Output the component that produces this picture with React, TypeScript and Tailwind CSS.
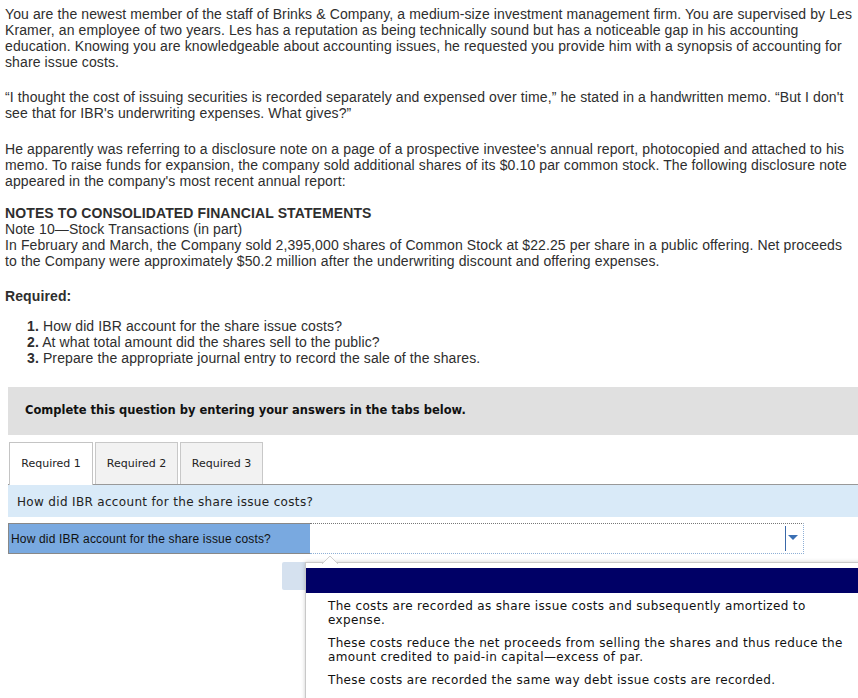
import React from "react";

const main = { fontFamily: '"Liberation Sans", Arial, sans-serif' };
const verd = { fontFamily: '"DejaVu Sans", Verdana, sans-serif' };

export default function App() {
  return (
    <div className="relative w-[858px] h-[698px] overflow-hidden bg-white">
      <div className="pl-[5px] pr-[2px] pt-[6px] text-[14px] leading-[16px] tracking-[0.11px] text-[#2e2e2e]" style={main}>
        <p>
          You are the newest member of the staff of Brinks &amp; Company, a medium-size investment management firm. You are supervised by Les<br />
          Kramer, an employee of two years. Les has a reputation as being technically sound but has a noticeable gap in his accounting<br />
          education. Knowing you are knowledgeable about accounting issues, he requested you provide him with a synopsis of accounting for<br />
          share issue costs.
        </p>
        <p className="mt-[19px]">
          “I thought the cost of issuing securities is recorded separately and expensed over time,” he stated in a handwritten memo. “But I don't<br />
          see that for IBR's underwriting expenses. What gives?”
        </p>
        <p className="mt-[20px]">
          He apparently was referring to a disclosure note on a page of a prospective investee's annual report, photocopied and attached to his<br />
          memo. To raise funds for expansion, the company sold additional shares of its $0.10 par common stock. The following disclosure note<br />
          appeared in the company's most recent annual report:
        </p>
        <div className="mt-[16px]">
          <div className="font-bold">NOTES TO CONSOLIDATED FINANCIAL STATEMENTS</div>
          <div>Note 10—Stock Transactions (in part)</div>
          <div>
            In February and March, the Company sold 2,395,000 shares of Common Stock at $22.25 per share in a public offering. Net proceeds<br />
            to the Company were approximately $50.2 million after the underwriting discount and offering expenses.
          </div>
        </div>
        <div className="mt-[19px] font-bold">Required:</div>
        <div className="mt-[14px] pl-[22px]">
          <div><span className="font-bold">1.</span> How did IBR account for the share issue costs?</div>
          <div><span className="font-bold">2.</span> At what total amount did the shares sell to the public?</div>
          <div><span className="font-bold">3.</span> Prepare the appropriate journal entry to record the sale of the shares.</div>
        </div>
      </div>

      <div className="ml-[8px] mt-[21px]">
        <div className="h-[48px] bg-[#e0e0e0] flex items-center pl-[17px] text-[11.5px] font-bold text-[#111]" style={verd}>
          Complete this question by entering your answers in the tabs below.
        </div>

        <div className="mt-[7px] flex gap-[2px] border-b border-[#999] pl-[1px] h-[43px] items-end">
          <div className="relative -mb-px h-[43px] w-[84px] bg-white border border-b-0 border-[#c4c4c4] flex items-center justify-center pt-[1px] text-[11px] text-[#222]" style={verd}>
            Required 1
          </div>
          <div className="h-[42px] w-[83px] bg-[#f2f2f2] border border-b-0 border-[#c8c8c8] flex items-center justify-center pt-[1px] text-[11px] text-[#222]" style={verd}>
            Required 2
          </div>
          <div className="h-[42px] w-[83px] bg-[#f2f2f2] border border-b-0 border-[#c8c8c8] flex items-center justify-center pt-[1px] text-[11px] text-[#222]" style={verd}>
            Required 3
          </div>
        </div>

        <div className="h-[32px] bg-[#d9eaf8] flex items-center pl-[9px] pt-[1px] text-[12px] tracking-[0.33px] text-[#222]" style={verd}>
          How did IBR account for the share issue costs?
        </div>

        <div className="mt-[6px] flex h-[31px]">
          <div className="w-[302px] bg-[#79a9e0] border-t border-l border-b border-[#888] flex items-center pl-[2px] text-[12px] text-[#111] tracking-[0.17px]" style={main}>
            How did IBR account for the share issue costs?
          </div>
          <div className="relative w-[494px] bg-white border-t border-dotted border-t-[#777] border-b border-b-[#8fb0d6] border-r border-r-[#8fb0d6]">
            <div className="absolute right-[17px] top-[2px] h-[25px] w-px bg-[#3a68a8]" />
            <svg className="absolute right-[5px] top-[11px]" width="10" height="6" viewBox="0 0 10 6">
              <path d="M0 0 H10 L5 5 Z" fill="#3a6fb3" />
            </svg>
          </div>
        </div>
      </div>

      {/* light rect under dropdown */}
      <div className="absolute left-[282px] top-[562px] w-[24px] h-[28px] bg-[#d5e1ef] rounded-l-[2px]" />

      {/* popup */}
      <div className="absolute left-[305px] top-[562px] w-[600px] h-[200px] bg-white border border-[#c8c8c8] shadow-[0_0_4px_rgba(0,0,0,0.2)]">
        <svg className="absolute left-[16px] -top-[7px]" width="16" height="8" viewBox="0 0 16 8">
          <path d="M0 8 L8 0 L16 8" fill="white" stroke="#d0d0d0" />
        </svg>
        <div className="mt-[5px] h-[25px] bg-[#000066]" />
        <div className="pl-[22px] pt-[6px] text-[12px] leading-[14px] tracking-[0.34px] text-[#111]" style={verd}>
          <div>The costs are recorded as share issue costs and subsequently amortized to<br />expense.</div>
          <div className="mt-[9px]">These costs reduce the net proceeds from selling the shares and thus reduce the<br />amount credited to paid-in capital—excess of par.</div>
          <div className="mt-[9px]">These costs are recorded the same way debt issue costs are recorded.</div>
        </div>
      </div>
    </div>
  );
}
